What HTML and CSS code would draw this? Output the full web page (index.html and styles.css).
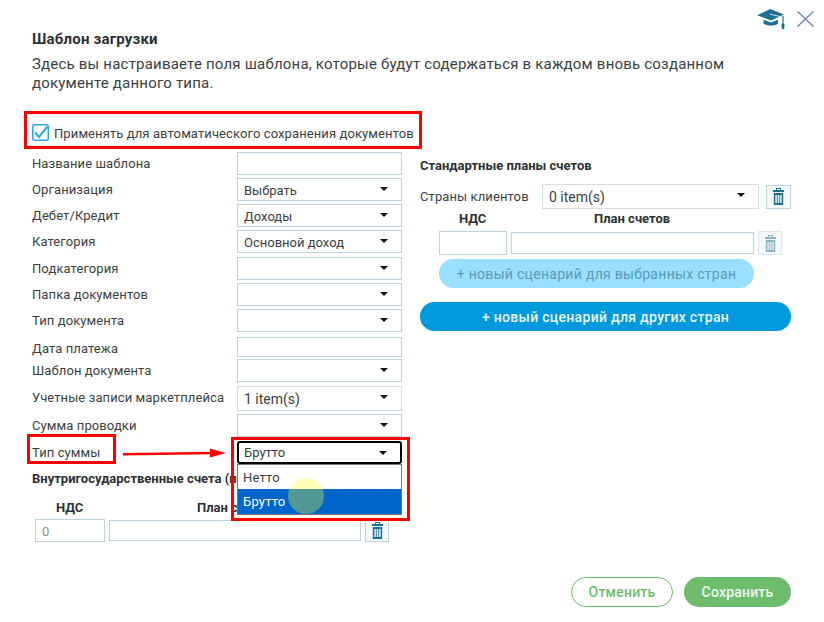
FILE: index.html
```html
<!DOCTYPE html>
<html lang="ru">
<head>
<meta charset="utf-8">
<title>Шаблон загрузки</title>
<link rel="stylesheet" href="styles.css">
</head>
<body>
<div class="dialog">
  <div class="toolbar">
    <svg class="cap" viewBox="0 0 28 20" width="28" height="20">
      <path fill="#1c7193" d="M0 6.2 13.4 0 27 5.6 14 11.4Z"/>
      <path fill="#1c7193" d="M6.5 10.8 14 13.6l7-2.8v3.6c-1.6 1.4-4 2.1-7 2.1-3.2 0-5.8-.8-7.5-2.1Z"/>
      <path fill="none" stroke="#cfe3ec" stroke-width="1" d="M13 5.2 25 8"/>
      <path fill="none" stroke="#1c7193" stroke-width="1.2" d="M26 7v8"/>
      <rect x="24.6" y="14.5" width="2.8" height="5.5" rx="1" fill="#1c7193"/>
    </svg>
    <svg class="close" viewBox="0 0 17 16" width="17" height="16">
      <path d="M.5.5 16.5 15.5M16.5.5.5 15.5" stroke="#6c86a8" stroke-width="1.3" fill="none"/>
    </svg>
  </div>
  <h1 class="title">Шаблон загрузки</h1>
  <p class="lead">Здесь вы настраиваете поля шаблона, которые будут содержаться в каждом вновь созданном документе данного типа.</p>
  <label class="auto">
    <svg class="check" viewBox="0 0 17 17" width="17" height="17">
      <rect x=".75" y=".75" width="15.5" height="15.5" rx="1.5" fill="#fff" stroke="#2aa9e0" stroke-width="1.5"/>
      <path d="M3 8.5 7 13 15.5 2.5" fill="none" stroke="#2aa9e0" stroke-width="2"/>
    </svg>
    <span>Применять для автоматического сохранения документов</span>
  </label>
  <div class="columns">
    <section class="left">
      <div class="form">
        <span class="lbl">Название шаблона</span><div class="field"></div>
        <span class="lbl">Организация</span><div class="field sel">Выбрать</div>
        <span class="lbl">Дебет/Кредит</span><div class="field sel">Доходы</div>
        <span class="lbl">Категория</span><div class="field sel">Основной доход</div>
        <span class="lbl">Подкатегория</span><div class="field sel"></div>
        <span class="lbl">Папка документов</span><div class="field sel"></div>
        <span class="lbl">Тип документа</span><div class="field sel"></div>
        <span class="lbl">Дата платежа</span><div class="field short"></div>
        <span class="lbl">Шаблон документа</span><div class="field sel"></div>
        <span class="lbl">Учетные записи маркетплейса</span><div class="field sel multi">1 item(s)</div>
        <span class="lbl">Сумма проводки</span><div class="field sel"></div>
        <span class="lbl">Тип суммы</span><div class="field sel focus">Брутто</div>
      </div>
      <h2 class="sub inner">Внутригосударственные счета (по умолчанию)</h2>
      <div class="heads heads-left"><b class="h-vat">НДС</b><b class="h-plan">План счетов</b></div>
      <div class="vat-row vat-left">
        <div class="field vat val">0</div>
        <div class="field plan"></div>
        <div class="trash"><svg viewBox="0 0 11 17" width="11" height="17"><use href="#bin"/></svg></div>
      </div>
    </section>
    <section class="right">
      <h2 class="sub std">Стандартные планы счетов</h2>
      <div class="countries">
        <span class="lbl">Страны клиентов</span>
        <div class="field sel multi grow">0 item(s)</div>
        <div class="trash tall"><svg viewBox="0 0 11 17" width="11" height="17"><use href="#bin"/></svg></div>
      </div>
      <div class="inset">
        <div class="heads"><b class="h-vat2">НДС</b><b class="h-plan2">План счетов</b></div>
        <div class="vat-row">
          <div class="field vat2"></div>
          <div class="field plan2"></div>
          <div class="trash off"><svg viewBox="0 0 11 17" width="11" height="17"><use href="#bin"/></svg></div>
        </div>
        <button class="pill pale">+ новый сценарий для выбранных стран</button>
      </div>
      <button class="pill blue">+ новый сценарий для других стран</button>
    </section>
  </div>
  <div class="footer">
    <button class="btn ghost">Отменить</button>
    <button class="btn solid">Сохранить</button>
  </div>

  <div class="menu">
    <div class="opt">Нетто</div>
    <div class="opt on">Брутто</div>
  </div>
  <div class="spot"></div>
  <div class="mark mark-check"></div>
  <div class="mark mark-type"></div>
  <div class="mark mark-select"></div>
  <svg class="arrow" viewBox="0 0 104 12" width="104" height="12">
    <path d="M0 7.2 90 6" stroke="#f00" stroke-width="2.6" fill="none"/>
    <path d="M87 1.5 103 6 87 10.5Z" fill="#f00"/>
  </svg>
</div>
<svg class="defs" width="0" height="0">
  <symbol id="bin" viewBox="0 0 11 17">
    <path fill="currentColor" fill-rule="evenodd" d="M3 0h5v2h3v2H0V2h3ZM4 1v1h3V1Z"/>
    <path fill="currentColor" d="M.8 5h9.4v12H.8Z"/>
    <path fill="#dfeaf0" d="M2.3 7h1.6v8H2.3ZM4.7 7h1.6v8H4.7ZM7.1 7h1.6v8H7.1Z"/>
  </symbol>
</svg>
</body>
</html>
```
FILE: styles.css
```css
* { box-sizing: border-box; }
html, body { margin: 0; padding: 0; }
body {
  background: #fff;
  color: #3a3f42;
  font-family: Roboto, "Noto Sans", sans-serif;
  font-size: 13px;
}
.dialog {
  position: relative;
  width: 824px;
  height: 622px;
  overflow: hidden;
  padding: 9px 33px 0 32px;
}
.defs { position: absolute; }
.toolbar {
  display: flex;
  justify-content: flex-end;
  align-items: flex-start;
  gap: 12px;
  height: 20px;
  margin-right: -23px;
}
.close { margin-top: 2px; }
.title {
  margin: 0;
  font-size: 15px;
  font-weight: 700;
  line-height: 20px;
  letter-spacing: .2px;
  color: #2c3134;
}
.lead {
  margin: 6px 0 0;
  width: 740px;
  font-size: 15px;
  line-height: 19px;
  letter-spacing: .2px;
}
.auto {
  display: flex;
  align-items: center;
  gap: 5px;
  margin-top: 30px;
  height: 20px;
  letter-spacing: .1px;
}
.check { margin-top: -1px; }
.columns {
  display: flex;
  gap: 18px;
  margin-top: 9px;
}
.left { width: 370px; }
.right { width: 371px; padding-top: 6px; }
.form {
  display: grid;
  grid-template-columns: 205px 165px;
  grid-template-rows: 26px 26px 26px 27px 26px 26px 28px 22px 27px 28px 27px 23px;
}
.lbl {
  align-self: start;
  line-height: 23px;
  white-space: nowrap;
  letter-spacing: .1px;
}
.field {
  height: 23px;
  border: 1px solid #bcd3de;
  background: #fff;
  line-height: 21px;
  padding: 1px 6px 0;
  position: relative;
  color: #3a3f42;
}
.sel::after {
  content: "";
  position: absolute;
  right: 13px;
  top: 8px;
  border: 4.5px solid transparent;
  border-top: 4.5px solid #111;
  border-bottom: 0;
}
.multi {
  height: 25px;
  border-color: #d8dde0;
  font-size: 14px;
  line-height: 22px;
}
.short { height: 20px; }
.focus {
  border: 2px solid #000;
  border-radius: 3px;
  padding: 0 5px;
  line-height: 19px;
}
.sub {
  margin: 0;
  font-size: 13px;
  font-weight: 700;
  line-height: 16px;
  color: #2c3134;
  white-space: nowrap;
}
.inner { margin-top: 7px; }
.heads {
  position: relative;
  height: 16px;
  font-size: 13px;
  line-height: 16px;
  color: #2c3134;
}
.heads b { position: absolute; top: 0; white-space: nowrap; }
.heads-left { margin-top: 13px; }
.h-vat { left: 24px; }
.h-plan { left: 165px; }
.h-vat2 { left: 20px; }
.h-plan2 { left: 155px; }
.vat-row {
  display: flex;
  align-items: center;
  gap: 4px;
}
.vat-left { margin: 3px 0 0 3px; }
.vat { width: 70px; }
.val { color: #8a9296; }
.plan { width: 252px; height: 21px; }
.vat2 { width: 68px; height: 24px; }
.plan2 { width: 243px; height: 22px; }
.trash {
  width: 24px;
  height: 23px;
  border: 1px solid #bcd3de;
  background: #f5f9fb;
  color: #1c7193;
  display: flex;
  align-items: center;
  justify-content: center;
}
.trash svg { display: block; }
.tall { width: 25px; height: 24px; }
.off { height: 24px; color: #8cb4c7; border-color: #dbe8ee; }
.std { margin-bottom: 10px; }
.countries {
  display: flex;
  align-items: center;
}
.countries .lbl { width: 122px; align-self: center; }
.grow { width: 217px; margin-right: 7px; }
.inset { padding-left: 19px; margin-top: 2px; }
.inset .vat-row { margin-top: 4px; }
.pill {
  display: block;
  border: 0;
  border-radius: 15px;
  height: 29px;
  font-family: inherit;
  font-size: 14px;
  padding: 0;
  letter-spacing: .3px;
}
.pale {
  width: 315px;
  margin-top: 4px;
  background: #99dfff;
  color: #5b9ab8;
}
.blue {
  width: 371px;
  margin-top: 14px;
  background: #0099dd;
  color: #e8f6fc;
  font-weight: 500;
}
.footer {
  position: absolute;
  right: 33px;
  top: 577px;
  display: flex;
  gap: 11px;
}
.btn {
  height: 30px;
  border-radius: 15px;
  font-family: inherit;
  font-size: 14px;
  font-weight: 500;
  padding: 0;
  letter-spacing: .2px;
}
.ghost { width: 102px; background: #fff; border: 1px solid #6dbd6d; color: #6dbd6d; }
.solid { width: 107px; background: #6dbd6d; border: 0; color: #f0f8f0; }
.menu {
  position: absolute;
  left: 237px;
  top: 464px;
  width: 165px;
  height: 51px;
  border: 1px solid #777;
  background: #fff;
  font-size: 13px;
  letter-spacing: .2px;
}
.opt { height: 24px; line-height: 26px; padding-left: 5px; }
.on { background: #0066cc; color: #fff; height: 25px; }
.spot {
  position: absolute;
  left: 288px;
  top: 478px;
  width: 36px;
  height: 36px;
  border-radius: 50%;
  background: rgba(255, 255, 40, .33);
}
.mark { position: absolute; border: 3px solid #f00; }
.mark-check { left: 24px; top: 111px; width: 398px; height: 38px; }
.mark-type { left: 27px; top: 434px; width: 89px; height: 30px; }
.mark-select { left: 231px; top: 437px; width: 179px; height: 84px; }
.arrow { position: absolute; left: 123px; top: 447px; }
```
